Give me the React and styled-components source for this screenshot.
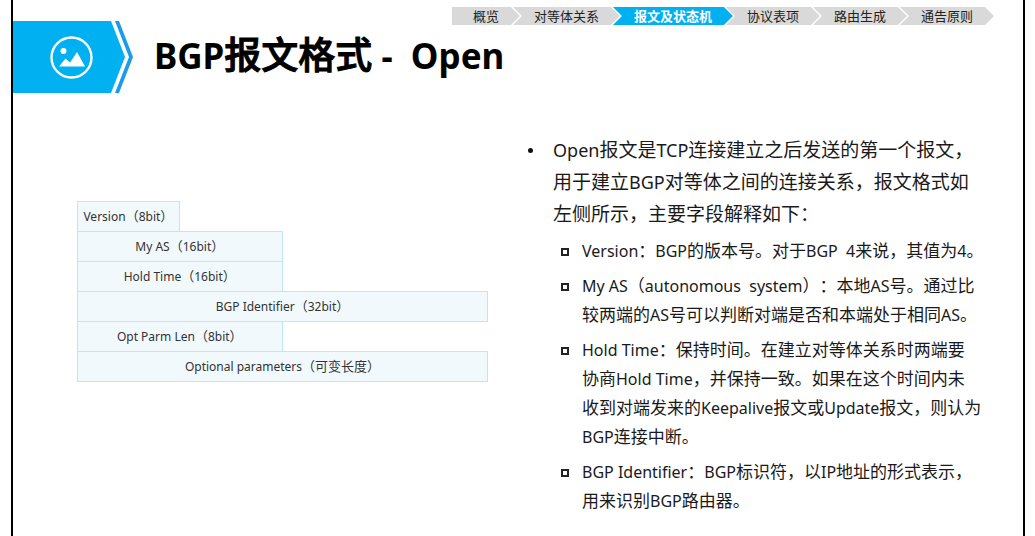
import React from "react";
import styled, { createGlobalStyle } from "styled-components";

const GlobalStyle = createGlobalStyle`
  *, *::before, *::after { box-sizing: border-box; }
  body {
    margin: 0;
    background: #fff;
    color: #1a1a1a;
    font-family: "Noto Sans CJK SC", sans-serif;
    text-spacing-trim: space-all;
  }
  h1, p, ul, ol { margin: 0; padding: 0; }
  ul, ol { list-style: none; }
`;

const Slide = styled.main`
  min-height: 100vh;
  margin: 0 10px 0 11px;
  border: solid #000;
  border-width: 0 2px;
`;

const Header = styled.header`
  display: flex;
  align-items: flex-start;
`;

const BadgeIcon = styled.svg`
  flex: none;
  width: 121px;
  height: 72px;
  margin-top: 21px;
`;

const HeaderMain = styled.div`
  flex: 1;
  padding: 7px 29px 0 20px;
`;

const Steps = styled.ol`
  display: flex;
  justify-content: flex-end;
`;

const Step = styled.li`
  & + & { margin-left: -7px; }
`;

const StepLink = styled.a`
  display: block;
  padding: 0 21px;
  font-size: 13px;
  line-height: 18px;
  white-space: nowrap;
  text-decoration: none;
  color: ${(p) => (p.$active ? "#fff" : "#222")};
  font-weight: ${(p) => (p.$active ? 700 : 400)};
  background: ${(p) => (p.$active ? "#00b0f0" : "#d9d9d9")};
  clip-path: polygon(
    0 0, calc(100% - 9px) 0, 100% 50%, calc(100% - 9px) 100%, 0 100%,
    ${(p) => (p.$first ? "0 50%" : "9px 50%")}
  );
`;

const Title = styled.h1`
  font-size: 37px;
  line-height: 56px;
  font-weight: 500;
  color: #000;
  white-space: pre;
  -webkit-text-stroke: 1px #000;
`;

const Latin = styled.span`
  font-family: "Noto Sans", sans-serif;
  font-size: ${(p) => p.$size}px;
  font-weight: ${(p) => (p.$bold ? 700 : "inherit")};
  -webkit-text-stroke-width: 0;
`;

const Content = styled.div`
  display: grid;
  grid-template-columns: 411fr 457fr;
  column-gap: 39px;
  align-items: start;
  padding: 40px 39px 0 64px;
`;

const Packet = styled.ul`
  margin-top: 68px;
`;

const Field = styled.li`
  width: ${(p) => p.$share}%;
  height: 31px;
  margin-bottom: -1px;
  border: 1px solid #bfe6f6;
  background: #f1f9fd;
  color: #333;
  font-size: 13px;
  line-height: 28px;
  text-align: center;
  white-space: pre;
`;

const Bullet = styled.div`
  display: grid;
  grid-template-columns: 26px 1fr;
  &::before {
    content: "";
    width: 5px;
    height: 5px;
    margin: 15px 0 0 1px;
    border-radius: 50%;
    background: #111;
  }
`;

const Lead = styled.p`
  font-size: 19px;
  line-height: 32px;
`;

const Line = styled.span`
  display: block;
  white-space: pre;
  height: ${(p) => p.$height}px;
`;

const Notes = styled.ul`
  display: grid;
  row-gap: 6px;
  margin-top: 6px;
  padding-left: 8px;
`;

const Note = styled.li`
  display: grid;
  grid-template-columns: 21px 1fr;
  font-size: 17px;
  line-height: 29px;
  &::before {
    content: "";
    width: 8px;
    height: 8px;
    margin-top: 13px;
    border: solid #222;
    border-width: 2px;
  }
`;

const steps = ["概览", "对等体关系", "报文及状态机", "协议表项", "路由生成", "通告原则"];
const activeStep = 2;

const fields = [
  { label: "Version（8bit）", share: 25 },
  { label: "My AS（16bit）", share: 50 },
  { label: "Hold Time（16bit）", share: 50 },
  { label: "BGP Identifier（32bit）", share: 100 },
  { label: "Opt Parm Len（8bit）", share: 50 },
  { label: "Optional parameters（可变长度）", share: 100 },
];

const lead = [
  "Open报文是TCP连接建立之后发送的第一个报文，",
  "用于建立BGP对等体之间的连接关系，报文格式如",
  "左侧所示，主要字段解释如下：",
];

const notes = [
  ["Version：BGP的版本号。对于BGP  4来说，其值为4。"],
  [
    "My AS（autonomous  system）：本地AS号。通过比",
    "较两端的AS号可以判断对端是否和本端处于相同AS。",
  ],
  [
    "Hold Time：保持时间。在建立对等体关系时两端要",
    "协商Hold Time，并保持一致。如果在这个时间内未",
    "收到对端发来的Keepalive报文或Update报文，则认为",
    "BGP连接中断。",
  ],
  ["BGP Identifier：BGP标识符，以IP地址的形式表示，", "用来识别BGP路由器。"],
];

/* Sets the Latin runs of a mixed string in the Latin face. */
function Mixed({ text, size, bold }) {
  return text.split(/([\x20-\x7e]+)/).map((part, i) =>
    i % 2 ? (
      <Latin key={i} $size={size} $bold={bold}>
        {part}
      </Latin>
    ) : (
      part
    )
  );
}

function Badge() {
  return (
    <BadgeIcon viewBox="0 0 121 72" aria-hidden="true">
      <path d="M0 0H98L112 36L98 72H0Z" fill="#00b0f0" />
      <path d="M102 0H106L120 36L106 72H102L116 36Z" fill="#1b9ce8" />
      <circle cx="58.5" cy="36.5" r="20" fill="none" stroke="#fff" strokeWidth="2.4" />
      <circle cx="50.5" cy="30" r="3" fill="#fff" />
      <path d="M46 45.5L52.5 37.5L57 41.5L64 31L72 45.5Z" fill="#fff" />
    </BadgeIcon>
  );
}

export default function App() {
  return (
    <>
      <GlobalStyle />
      <Slide lang="zh-CN">
        <Header>
          <Badge />
          <HeaderMain>
            <nav>
              <Steps>
                {steps.map((s, i) => (
                  <Step key={s}>
                    <StepLink href="#" $first={i === 0} $active={i === activeStep}>
                      {s}
                    </StepLink>
                  </Step>
                ))}
              </Steps>
            </nav>
            <Title>
              <Mixed text="BGP报文格式 -  Open" size={35} bold />
            </Title>
          </HeaderMain>
        </Header>
        <Content>
          <Packet>
            {fields.map((f) => (
              <Field key={f.label} $share={f.share}>
                <Mixed text={f.label} size={12} />
              </Field>
            ))}
          </Packet>
          <Bullet>
            <div>
              <Lead>
                {lead.map((l) => (
                  <Line key={l} $height={32}>
                    <Mixed text={l} size={18} />
                  </Line>
                ))}
              </Lead>
              <Notes>
                {notes.map((lines) => (
                  <Note key={lines[0]}>
                    <div>
                      {lines.map((l) => (
                        <Line key={l} $height={29}>
                          <Mixed text={l} size={16} />
                        </Line>
                      ))}
                    </div>
                  </Note>
                ))}
              </Notes>
            </div>
          </Bullet>
        </Content>
      </Slide>
    </>
  );
}
